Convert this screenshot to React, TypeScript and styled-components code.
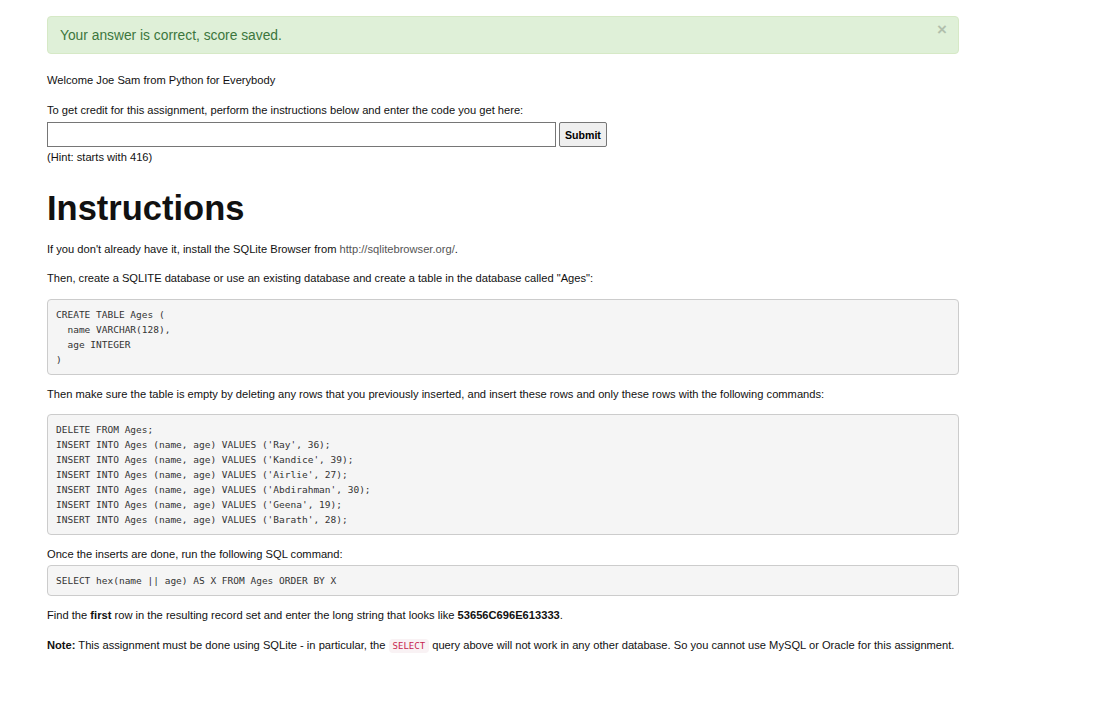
import styled, { createGlobalStyle } from "styled-components";

const GlobalStyle = createGlobalStyle`
    html, body {
        margin: 0;
        padding: 0;
        background: #fff;
    }
    body {
        font-family: "Liberation Sans", Arial, sans-serif;
        font-size: 11.15px;
        color: #111;
    }
`;

const codeLines = {
    create: ["CREATE TABLE Ages (", "  name VARCHAR(128),", "  age INTEGER", ")"],
    inserts: [
        "DELETE FROM Ages;",
        "INSERT INTO Ages (name, age) VALUES ('Ray', 36);",
        "INSERT INTO Ages (name, age) VALUES ('Kandice', 39);",
        "INSERT INTO Ages (name, age) VALUES ('Airlie', 27);",
        "INSERT INTO Ages (name, age) VALUES ('Abdirahman', 30);",
        "INSERT INTO Ages (name, age) VALUES ('Geena', 19);",
        "INSERT INTO Ages (name, age) VALUES ('Barath', 28);",
    ],
    select: ["SELECT hex(name || age) AS X FROM Ages ORDER BY X"],
};

const App = () => {
    return (
        <Page>
            <GlobalStyle />
            <Container>
                <Alert>
                    <span>Your answer is correct, score saved.</span>
                    <Close>×</Close>
                </Alert>
                <P>Welcome Joe Sam from Python for Everybody</P>
                <Form>
                    <Line>To get credit for this assignment, perform the instructions below and enter the code you get here:</Line>
                    <InputRow>
                        <CodeInput type="text" />
                        <SubmitButton>Submit</SubmitButton>
                    </InputRow>
                    <Line>(Hint: starts with 416)</Line>
                </Form>
                <H1>Instructions</H1>
                <P>
                    If you don't already have it, install the SQLite Browser from{" "}
                    <Link href="#">http://sqlitebrowser.org/</Link>.
                </P>
                <P $gap={12}>Then, create a SQLITE database or use an existing database and create a table in the database called "Ages":</P>
                <Pre>{codeLines.create.join("\n")}</Pre>
                <P>
                    Then make sure the table is empty by deleting any rows that you previously inserted, and insert these rows and only these rows with the following commands:
                </P>
                <Pre>{codeLines.inserts.join("\n")}</Pre>
                <P $gap={2}>Once the inserts are done, run the following SQL command:</P>
                <Pre>{codeLines.select.join("\n")}</Pre>
                <P $gap={12}>
                    Find the <b>first</b> row in the resulting record set and enter the long string that looks like <b>53656C696E613333</b>.
                </P>
                <P $nowrap>
                    <b>Note:</b> This assignment must be done using SQLite - in particular, the <Code>SELECT</Code> query above will not work in any other database. So you cannot use MySQL or Oracle for this assignment.
                </P>
            </Container>
        </Page>
    );
};

export default App;

const Page = styled.div`
    padding: 16px 0 40px 47px;
`;

const Container = styled.div`
    width: 912px;
`;

const Alert = styled.div`
    display: flex;
    align-items: center;
    justify-content: space-between;
    height: 38px;
    box-sizing: border-box;
    padding: 0 11px 0 12px;
    margin-bottom: 17px;

    border: 1px solid #d6e9c6;
    border-radius: 4px;
    background-color: #dff0d8;
    color: #3c763d;
    font-size: 13.8px;
`;

const Close = styled.span`
    align-self: flex-start;
    margin-top: 4px;
    color: #000;
    opacity: 0.2;
    font-size: 17px;
    font-weight: bold;
    line-height: 1;
`;

const P = styled.p<{ $gap?: number; $nowrap?: boolean }>`
    margin: 0 0 ${({ $gap }) => $gap ?? 11}px;
    line-height: 18px;
    white-space: ${({ $nowrap }) => ($nowrap ? "nowrap" : "normal")};
`;

const Form = styled.div`
    display: flex;
    flex-direction: column;
`;

const Line = styled.div`
    line-height: 18px;

    &:first-child {
        margin-top: 1px;
    }
`;

const InputRow = styled.div`
    display: flex;
    gap: 3px;
    margin: 3px 0 1px;
`;

const CodeInput = styled.input`
    width: 509px;
    height: 25px;
    box-sizing: border-box;
    margin: 0;
    border: 1px solid #767676;
    border-radius: 0;
`;

const SubmitButton = styled.button`
    height: 25px;
    box-sizing: border-box;
    padding: 0 5px;
    margin: 0;

    border: 1px solid #767676;
    border-radius: 2px;
    background-color: #efefef;
    color: #000;
    font-family: "Liberation Sans", Arial, sans-serif;
    font-size: 10.6px;
    font-weight: bold;
`;

const H1 = styled.h1`
    margin: 24px 0 12px;
    font-size: 34.5px;
    line-height: 1.1;
    font-weight: bold;
    color: #111;
`;

const Link = styled.a`
    color: #555;
    text-decoration: none;
`;

const Pre = styled.pre`
    margin: 0 0 10px;
    padding: 7px 8px;

    border: 1px solid #ccc;
    border-radius: 4px;
    background-color: #f5f5f5;
    color: #333;
    font-family: "DejaVu Sans Mono", monospace;
    font-size: 9.5px;
    line-height: 15px;
    white-space: pre;
`;

const Code = styled.code`
    padding: 2px 4px;
    border-radius: 4px;
    background-color: #f9f2f4;
    color: #c7254e;
    font-family: "DejaVu Sans Mono", monospace;
    font-size: 9px;
`;
